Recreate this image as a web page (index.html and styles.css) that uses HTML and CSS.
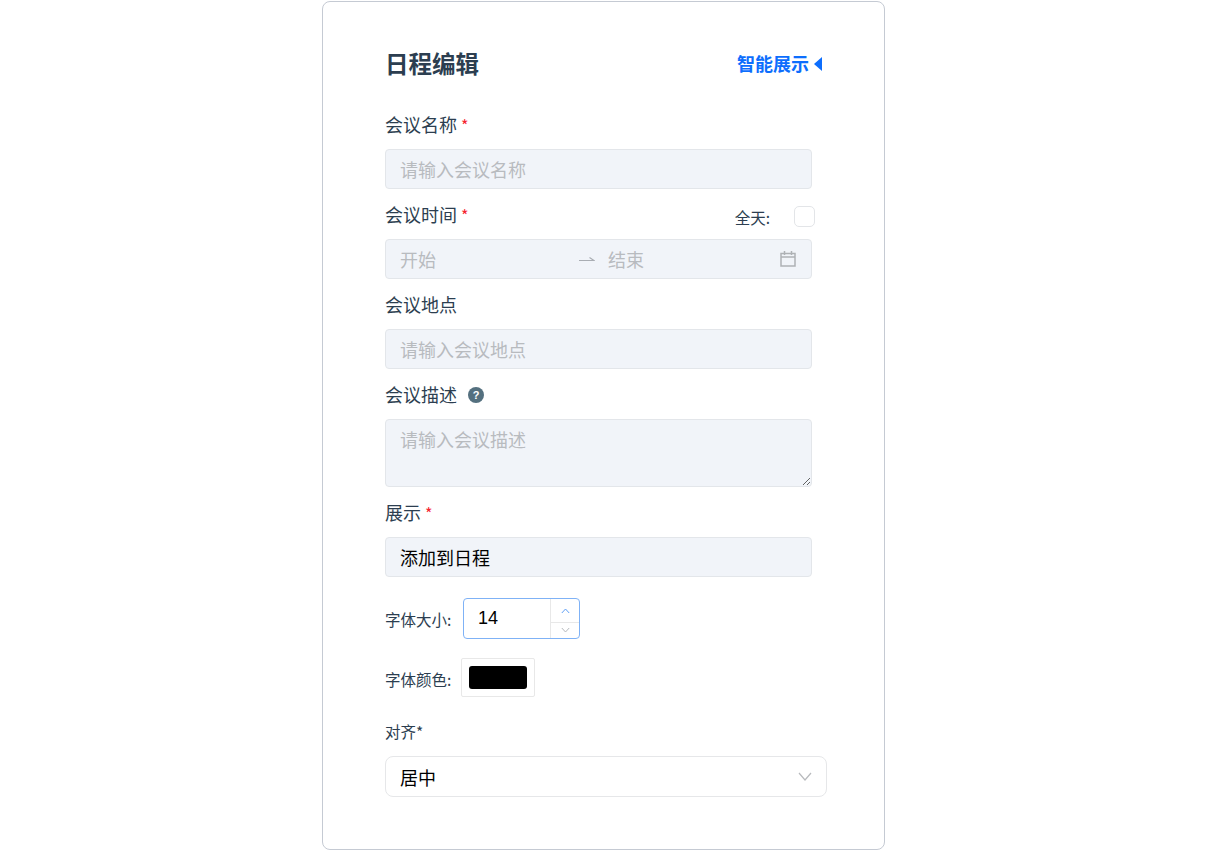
FILE: index.html
```html
<!DOCTYPE html>
<html>
<head>
  <meta charset="UTF-8"/>
  <title>日程编辑</title>
  <link rel="stylesheet" href="styles.css">
</head>
<body>
  <div class="card">
    <div class="head">
      <h2>日程编辑</h2>
      <a class="smart">智能展示<span class="arrow"></span></a>
    </div>

    <div class="field">
      <label>会议名称<span class="req">*</span></label>
      <input class="box" type="text" placeholder="请输入会议名称">
    </div>

    <div class="field">
      <div class="time-label">
        <label>会议时间<span class="req">*</span></label>
        <div class="allday"><span>全天:</span><input class="check" type="checkbox"></div>
      </div>
      <div class="box range">
        <span class="range-start">开始</span>
        <svg class="range-arrow" width="16" height="8" viewBox="0 0 16 8"><path d="M0 5.500h15L10.500 2.500" fill="none" stroke="#a9adb3" stroke-width="1.200"/></svg>
        <span class="range-end">结束</span>
        <svg class="cal" width="16" height="16" viewBox="0 0 16 16"><path d="M1 2.500h14v12.500H1zM1 6h14M4.500 0v4M11.500 0v4" fill="none" stroke="#aeb1b5" stroke-width="1.500"/></svg>
      </div>
    </div>

    <div class="field">
      <label>会议地点</label>
      <input class="box" type="text" placeholder="请输入会议地点">
    </div>

    <div class="field">
      <label>会议描述<span class="help">?</span></label>
      <textarea class="box area" placeholder="请输入会议描述"></textarea>
    </div>

    <div class="field">
      <label>展示<span class="req">*</span></label>
      <input class="box filled" type="text" value="添加到日程">
    </div>

    <div class="inline size-row">
      <span class="small">字体大小:</span>
      <div class="stepper">
        <input type="text" value="14">
        <div class="steps">
          <div class="step"><svg width="9" height="6" viewBox="0 0 9 6"><path d="M.8 5L4.500 1l3.700 4" fill="none" stroke="#5f9ff5" stroke-width="1"/></svg></div>
          <div class="step"><svg width="9" height="6" viewBox="0 0 9 6"><path d="M.8 1l3.700 4 3.700-4" fill="none" stroke="#b5b8bc" stroke-width="1"/></svg></div>
        </div>
      </div>
    </div>

    <div class="inline color-row">
      <span class="small">字体颜色:</span>
      <div class="swatch"><div class="swatch-fill"></div></div>
    </div>

    <div class="small align-label">对齐*</div>
    <div class="select">
      <span>居中</span>
      <svg width="14" height="9" viewBox="0 0 14 9"><path d="M1 1l6 7 6-7" fill="none" stroke="#b8babd" stroke-width="1.200"/></svg>
    </div>
  </div>
</body>
</html>
```

FILE: styles.css
```css
body {
  margin: 0;
  background: #fff;
  color: #2c3e50;
  font-family: "Noto Sans CJK SC", "Liberation Sans", sans-serif;
}
.card {
  box-sizing: border-box;
  width: 563px;
  height: 849px;
  margin: 1px 0 0 322px;
  padding: 48px 62px 0;
  border: 1px solid #c5cad3;
  border-radius: 8px;
}
.head {
  display: flex;
  justify-content: space-between;
  align-items: flex-start;
  height: 32px;
  margin-bottom: 31px;
}
.head h2 {
  margin: 0;
  font-size: 23.500px;
  font-weight: 700;
  line-height: 27px;
}
.smart {
  display: flex;
  align-items: center;
  color: #0d6efd;
  font-size: 18px;
  font-weight: 700;
  line-height: 27px;
}
.arrow {
  width: 0;
  height: 0;
  margin-left: 5px;
  border-top: 7px solid transparent;
  border-bottom: 7px solid transparent;
  border-right: 8px solid #0d6efd;
}
.field {
  margin-bottom: 14px;
}
.field label {
  display: block;
  height: 24px;
  margin-bottom: 12px;
  font-size: 18px;
  line-height: 22px;
}
.req {
  margin-left: 4px;
  color: #f5222d;
  font-size: 16px;
}
.box {
  display: block;
  box-sizing: border-box;
  width: 427px;
  height: 40px;
  padding: 0 14px;
  border: 1px solid #e3e6ea;
  border-radius: 4px;
  background: #f1f4f9;
  outline: none;
  color: #000;
  font-family: inherit;
  font-size: 18px;
}
.box::placeholder {
  color: #b8bbbf;
}
.area {
  height: 68px;
  padding-top: 4px;
  line-height: 30px;
}
.time-label {
  display: flex;
  justify-content: space-between;
  width: 430px;
}
.allday {
  display: flex;
  align-items: flex-start;
  font-size: 15.500px;
}
.allday span {
  margin-top: 2px;
  line-height: 24px;
}
.check {
  appearance: none;
  box-sizing: border-box;
  width: 21px;
  height: 21px;
  margin: 3px 0 0 24px;
  border: 1px solid #e3e5e8;
  border-radius: 5px;
  background: #fff;
}
.range {
  display: flex;
  align-items: center;
  color: #b8bbbf;
}
.range-start {
  width: 179px;
}
.range-end {
  flex: 1;
  margin-left: 13px;
}
.cal {
  margin-right: 1px;
}
.help {
  display: inline-block;
  width: 16px;
  height: 16px;
  margin-left: 11px;
  border-radius: 50%;
  background: #54707f;
  color: #fff;
  font-family: "Liberation Sans", sans-serif;
  font-size: 11px;
  font-weight: 700;
  line-height: 16px;
  text-align: center;
  vertical-align: 3px;
}
.inline {
  display: flex;
  align-items: center;
}
.small {
  font-size: 15.500px;
  line-height: 24px;
}
.size-row {
  margin-top: 21px;
}
.size-row .small {
  width: 78px;
}
.stepper {
  display: flex;
  box-sizing: border-box;
  width: 117px;
  height: 41px;
  border: 1px solid #7fb2f6;
  border-radius: 4px;
}
.stepper input {
  box-sizing: border-box;
  width: 86px;
  padding: 0 0 0 14px;
  border: none;
  outline: none;
  background: none;
  color: #000;
  font-family: "Liberation Sans", sans-serif;
  font-size: 18px;
}
.steps {
  flex: 1;
  border-left: 1px solid #e8e8e8;
}
.step {
  display: flex;
  justify-content: center;
  align-items: center;
  height: 23px;
}
.step + .step {
  height: 14px;
  border-top: 1px solid #e8e8e8;
}
.color-row {
  margin-top: 19px;
}
.color-row .small {
  width: 76px;
  margin-top: 2px;
}
.swatch {
  box-sizing: border-box;
  width: 74px;
  height: 39px;
  padding: 7px;
  border: 1px solid #e8e8e8;
  border-radius: 2px;
}
.swatch-fill {
  height: 23px;
  border-radius: 3px;
  background: #000;
}
.align-label {
  margin-top: 22px;
  margin-bottom: 13px;
}
.select {
  display: flex;
  justify-content: space-between;
  align-items: center;
  box-sizing: border-box;
  width: 442px;
  height: 41px;
  padding: 0 14px;
  border: 1px solid #e6e7e9;
  border-radius: 8px;
  color: #000;
  font-size: 18px;
}
```
